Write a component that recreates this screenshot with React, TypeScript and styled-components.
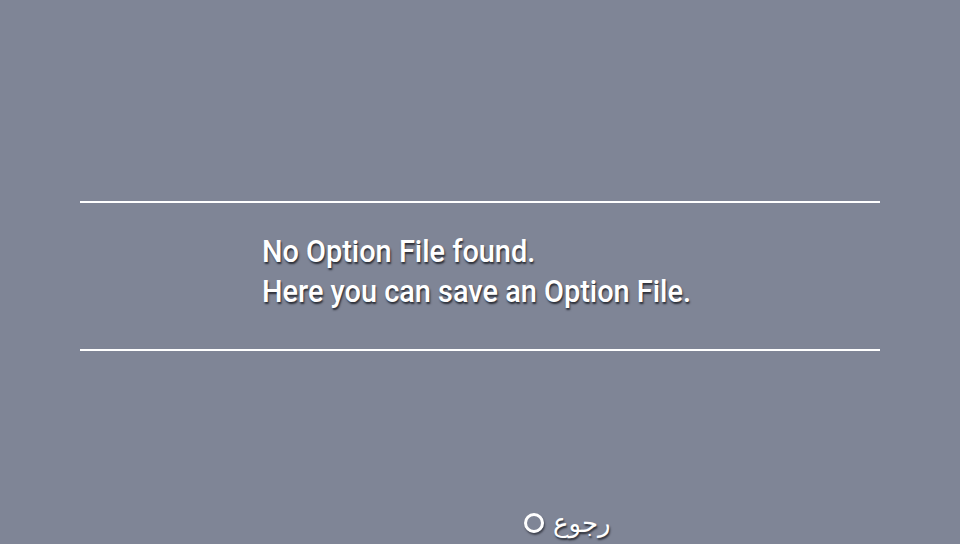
import styled, { createGlobalStyle } from 'styled-components';

const GlobalStyle = createGlobalStyle`
  html, body {
    margin: 0;
    padding: 0;
    background: #7f8596;
  }
  body {
    width: 960px;
    height: 544px;
    overflow: hidden;
  }
`;

const Screen = styled.div`
  width: 960px;
  height: 544px;
  display: flex;
  flex-direction: column;
  background: #7f8596;
  color: #ffffff;
  font-family: 'Roboto', 'Liberation Sans', sans-serif;
  text-shadow: 1px 2px 2px rgba(20, 22, 30, 0.8);
`;

const Panel = styled.section`
  margin: 201px 80px 0;
  height: 150px;
  box-sizing: border-box;
  border-top: 2px solid #ffffff;
  border-bottom: 2px solid #ffffff;
  padding: 28px 0 0 182px;
`;

const Message = styled.p`
  margin: 0;
  font-size: 32px;
  font-weight: 500;
  line-height: 40px;
  transform: scaleX(0.903);
  transform-origin: left top;
  white-space: nowrap;
`;

const Footer = styled.footer`
  margin-top: auto;
  height: 42px;
  padding-left: 524px;
  display: flex;
  align-items: center;
  gap: 9px;
`;

const CircleButton = styled.span`
  width: 14px;
  height: 14px;
  border: 3px solid #ffffff;
  border-radius: 50%;
  box-shadow: 1px 2px 2px rgba(20, 22, 30, 0.6);
`;

const BackLabel = styled.span`
  font-family: 'DejaVu Sans', 'Noto Sans', sans-serif;
  font-size: 26px;
  line-height: 1;
  direction: rtl;
`;

export default function App() {
  return (
    <>
      <GlobalStyle />
      <Screen>
        <Panel>
          <Message>
            No Option File found.
            <br />
            Here you can save an Option File.
          </Message>
        </Panel>
        <Footer>
          <CircleButton />
          <BackLabel>رجوع</BackLabel>
        </Footer>
      </Screen>
    </>
  );
}
